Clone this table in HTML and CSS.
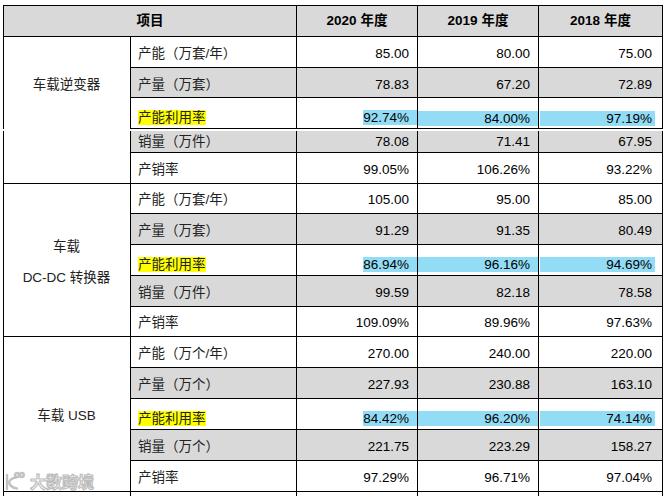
FILE: index.html
```html
<!DOCTYPE html>
<html lang="zh-CN">
<head>
<meta charset="utf-8">
<title>产能利用率</title>
<link rel="stylesheet" href="styles.css">
</head>
<body>
<div class="page">
  <table class="grid part-a">
    <colgroup><col class="c-cat"><col class="c-item"><col class="c-y"><col class="c-y"><col class="c-y3"></colgroup>
    <tr class="head">
      <th colspan="2">项目</th><th>2020 年度</th><th>2019 年度</th><th>2018 年度</th>
    </tr>
    <tr>
      <td rowspan="3" class="cat open-bottom">车载逆变器</td>
      <td class="item">产能（万套/年）</td><td class="num">85.00</td><td class="num">80.00</td><td class="num last">75.00</td>
    </tr>
    <tr class="gray h30">
      <td class="item">产量（万套）</td><td class="num">78.83</td><td class="num">67.20</td><td class="num last">72.89</td>
    </tr>
    <tr class="hl">
      <td class="item"><span class="yel">产能利用率</span></td>
      <td class="cy cy-a"><span>92.74%</span></td><td class="cy cy-b"><span>84.00%</span></td><td class="cy cy-c"><span>97.19%</span></td>
    </tr>
  </table>

  <table class="grid part-b">
    <colgroup><col class="c-cat"><col class="c-item"><col class="c-y"><col class="c-y"><col class="c-y3"></colgroup>
    <tr class="gray h21 first">
      <td rowspan="2" class="cat"></td>
      <td class="item">销量（万件）</td><td class="num">78.08</td><td class="num">71.41</td><td class="num last">67.95</td>
    </tr>
    <tr>
      <td class="item">产销率</td><td class="num">99.05%</td><td class="num">106.26%</td><td class="num last">93.22%</td>
    </tr>

    <tr class="h30">
      <td rowspan="5" class="cat dc"><p>车载</p><p>DC-DC 转换器</p></td>
      <td class="item">产能（万套/年）</td><td class="num">105.00</td><td class="num">95.00</td><td class="num last">85.00</td>
    </tr>
    <tr class="gray">
      <td class="item">产量（万套）</td><td class="num">91.29</td><td class="num">91.35</td><td class="num last">80.49</td>
    </tr>
    <tr class="hl">
      <td class="item"><span class="yel">产能利用率</span></td>
      <td class="cy cy-a"><span>86.94%</span></td><td class="cy cy-b"><span>96.16%</span></td><td class="cy cy-c"><span>94.69%</span></td>
    </tr>
    <tr class="gray">
      <td class="item">销量（万件）</td><td class="num">99.59</td><td class="num">82.18</td><td class="num last">78.58</td>
    </tr>
    <tr class="h30">
      <td class="item">产销率</td><td class="num">109.09%</td><td class="num">89.96%</td><td class="num last">97.63%</td>
    </tr>

    <tr>
      <td rowspan="5" class="cat usb">车载 USB</td>
      <td class="item">产能（万个/年）</td><td class="num">270.00</td><td class="num">240.00</td><td class="num last">220.00</td>
    </tr>
    <tr class="gray">
      <td class="item">产量（万个）</td><td class="num">227.93</td><td class="num">230.88</td><td class="num last">163.10</td>
    </tr>
    <tr class="hl">
      <td class="item"><span class="yel">产能利用率</span></td>
      <td class="cy cy-a"><span>84.42%</span></td><td class="cy cy-b"><span>96.20%</span></td><td class="cy cy-c"><span>74.14%</span></td>
    </tr>
    <tr class="gray">
      <td class="item">销量（万个）</td><td class="num">221.75</td><td class="num">223.29</td><td class="num last">158.27</td>
    </tr>
    <tr>
      <td class="item">产销率</td><td class="num">97.29%</td><td class="num">96.71%</td><td class="num last">97.04%</td>
    </tr>
    <tr class="tail">
      <td></td><td></td><td></td><td></td><td></td>
    </tr>
  </table>

  <div class="watermark">
    <svg class="wm-logo" width="22" height="20" viewBox="0 0 22 20">
      <path d="M3 4 V18" />
      <path d="M12 6.5 C8 7 5.5 9.5 5 11.5 C6 14.5 9 17 13 17.5" />
      <circle cx="13" cy="4" r="2" />
      <circle cx="17.8" cy="4" r="2" />
    </svg>
    <span class="wm-text">大数跨境</span>
  </div>
</div>
</body>
</html>
```

FILE: styles.css
```css
html, body {
  margin: 0;
  padding: 0;
  background: #ffffff;
}

.page {
  position: relative;
  width: 666px;
  height: 496px;
  overflow: hidden;
  padding: 5px 0 0 3px;
  box-sizing: border-box;
  font-family: "Liberation Sans", "Noto Sans CJK SC", sans-serif;
  font-size: 13.5px;
  color: #000;
}

.grid {
  border-collapse: collapse;
  table-layout: fixed;
  width: 659px;
}

.c-cat { width: 127px; }
.c-item { width: 166px; }
.c-y { width: 121px; }
.c-y3 { width: 124px; }

.grid th,
.grid td {
  border: 1px solid #000;
  padding: 4px 8px 0 7px;
  height: 31px;
  box-sizing: border-box;
  line-height: 16px;
  vertical-align: middle;
  white-space: nowrap;
}

.grid tr { height: 31px; }
.grid tr.h30 { height: 30px; }
.grid tr.h30 td { height: 30px; }
.grid tr.h21 { height: 21px; }
.grid tr.h21 td { height: 21px; padding-top: 1px; }

.head th {
  background: #d9d9d9;
  font-weight: bold;
  text-align: center;
  padding: 0;
}

.item {
  text-align: left;
  color: #222;
}

.num {
  text-align: right;
}

.num.last { padding-right: 10px; }

.gray .item,
.gray .num {
  background: #d9d9d9;
}

.cat {
  text-align: center;
  background: #fff;
  padding: 0;
  color: #222;
}

.open-bottom { border-bottom: none !important; }

.part-b { margin-top: 2px; }
.part-b .first td { border-top: none; }

.dc { padding-top: 12px; }
.dc p {
  margin: 0;
  line-height: 31px;
}

.usb { padding-top: 9px; }

/* highlighted rows */
.hl td { padding-top: 10px; }

.yel {
  background: #ffff00;
  line-height: 15px;
  display: inline-block;
}

.cy {
  padding-left: 0 !important;
  padding-right: 0 !important;
  text-align: right;
}

.cy span {
  display: inline-block;
  background: #93dcf5;
  line-height: 15px;
  height: 15px;
  box-sizing: border-box;
  text-align: right;
  padding-right: 8px;
}

.cy-b span { display: block; }

.cy-c span {
  display: block;
  margin-left: 1px;
  margin-right: 7px;
  padding-right: 3px;
}

.tail td { height: 12px; }

/* watermark overlay */
.watermark {
  position: absolute;
  left: 4px;
  top: 471px;
  display: flex;
  align-items: center;
  gap: 4px;
}

.wm-logo path,
.wm-logo circle {
  fill: none;
  stroke: #c2c2c2;
  stroke-width: 2.4;
  stroke-linecap: round;
}

.wm-text {
  font-family: "Noto Sans CJK SC", sans-serif;
  font-size: 16px;
  font-weight: bold;
  color: #ffffff;
  -webkit-text-stroke: 1.2px #bdbdbd;
  letter-spacing: 0;
  line-height: 18px;
}
```
